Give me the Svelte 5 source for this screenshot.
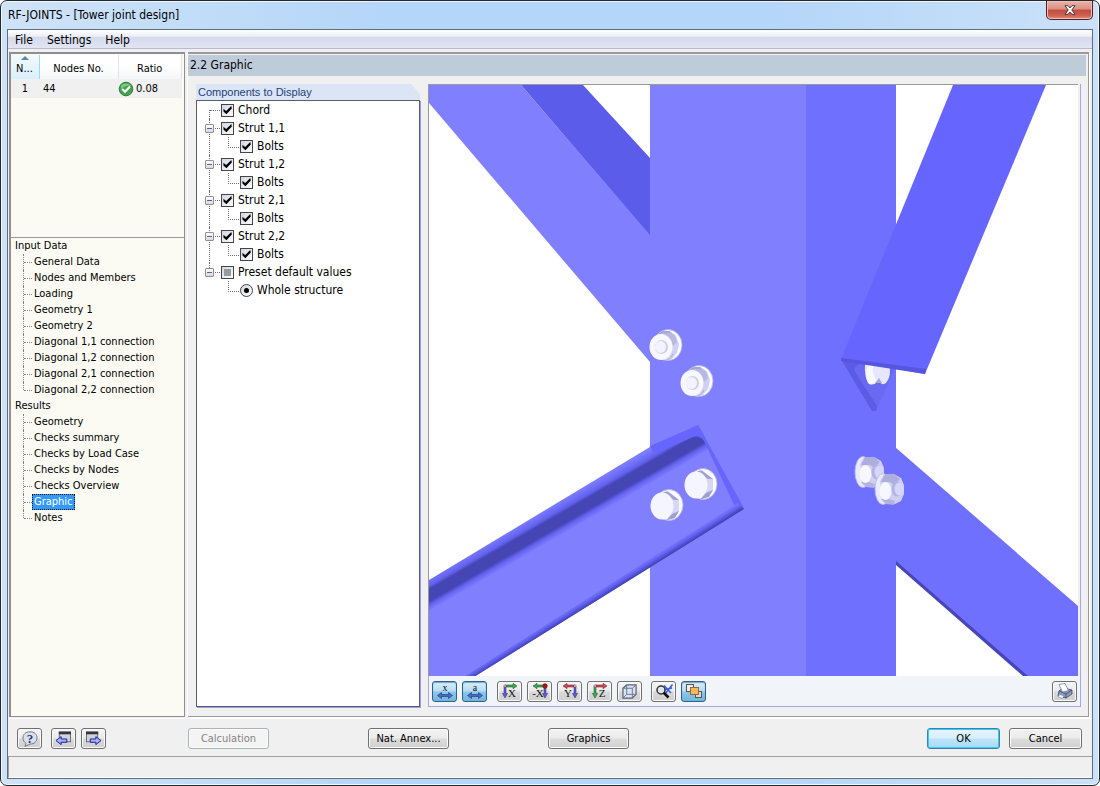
<script lang="ts">
  const inputPages = ['General Data', 'Nodes and Members', 'Loading', 'Geometry 1', 'Geometry 2', 'Diagonal 1,1 connection', 'Diagonal 1,2 connection', 'Diagonal 2,1 connection', 'Diagonal 2,2 connection'];
  const resultPages = ['Geometry', 'Checks summary', 'Checks by Load Case', 'Checks by Nodes', 'Checks Overview', 'Graphic', 'Notes'];
  const groups = [
    { title: 'Input Data', pages: inputPages },
    { title: 'Results', pages: resultPages }
  ];
  const struts = ['Strut 1,1', 'Strut 1,2', 'Strut 2,1', 'Strut 2,2'];
  let current = $state('Graphic');
</script>

{#snippet axes(label: string, h: string, v: string, flip: boolean, dot: boolean)}
  <svg viewBox="0 0 18 16" width="18" height="16" aria-hidden="true">
    <g transform={flip ? 'translate(18 0) scale(-1 1)' : ''}>
      <path d="M4 2H12V.3L16 3L12 5.700V4H4Z" fill={h} stroke="#333" stroke-width=".5" />
      <path d="M3 3H5V10.500H6.500L4 15L1.500 10.500H3Z" fill={v} stroke="#333" stroke-width=".5" />
      <circle cx="4" cy="3" r={dot ? 2.4 : 1.2} fill={dot ? '#a01818' : '#f0c8e8'} stroke="#702020" stroke-width=".4" />
    </g>
    <text x={flip ? 7 : 11} y="14" text-anchor="middle" font-family="Liberation Serif, serif" font-size="11" fill="#111">{label}</text>
  </svg>
{/snippet}

{#snippet dimension(label: string)}
  <svg viewBox="0 0 18 19" width="18" height="19" aria-hidden="true">
    <text x="9" y="9" text-anchor="middle" font-family="Liberation Serif, serif" font-size="10" fill="#111">{label}</text>
    <path d="M1.500 13.500L5.500 10.500V12.500H12.500V10.500L16.500 13.500L12.500 16.500V14.500H5.500V16.500Z" fill="#4a68c8" stroke="#26407c" stroke-width=".7" />
  </svg>
{/snippet}

{#snippet nut(x: number, y: number)}
  <g transform="translate({x} {y})">
    <ellipse cx="3" cy="-1" rx="14" ry="15.5" fill="#fafaff" stroke="#b4b4dc" stroke-width=".8" />
    <path d="M-8-11L-2-15L4-15L11-10L14-2L12 7L7 13L0 15Z" fill="#d0d0f2" />
    <path d="M-7-12L-2-15L4-15L10-11L12-4L8 0L4-8L-2-11Z" fill="#b8b8e4" />
    <path d="M-9-9L-3-14L5-14" fill="none" stroke="#9090a8" stroke-width=".8" />
    <ellipse cx="-4" cy="1" rx="11.5" ry="13" fill="#f7f7ff" />
    <ellipse cx="-3.500" cy="1" rx="6.500" ry="7" fill="#cfcfe2" />
    <ellipse cx="-4.500" cy="1" rx="5.500" ry="6" fill="#f3f3ff" />
    <path d="M-2 15Q6 14 8 8" fill="none" stroke="#a0a0c4" stroke-width=".8" />
  </g>
{/snippet}

{#snippet head(x: number, y: number)}
  <g transform="translate({x} {y})">
    <ellipse cx="3" cy="-1" rx="14" ry="15.500" fill="#fafaff" stroke="#b4b4dc" stroke-width=".8" />
    <path d="M-6-12L1-15L8-10L13-6L13 6L6 9L3 14Z" fill="#d6d6f5" />
    <path d="M-3-14L2-14.500L13-6L8-6L1-10Z" fill="#a2a2d4" />
    <path d="M6 8L13 5L9 12L0 14.500Z" fill="#9f9fce" />
    <ellipse cx="-4" cy="0" rx="11.500" ry="13.500" fill="#f5f5ff" />
  </g>
{/snippet}

{#snippet sideNut(x: number, y: number)}
  <g transform="translate({x} {y})">
    <ellipse cx="-7" cy="0" rx="8" ry="15.500" fill="#e9e9ff" stroke="#b8b8e8" stroke-width=".8" />
    <path d="M-10-8L-6-15L4-15L11-11L14-4L14 5L11 12L5 15L-3 15L-8 12Z" fill="#cfcff6" />
    <path d="M-9-7L-5-15L4-15L10-10L4-4L0-7Z" fill="#aeaedc" />
    <path d="M-9 10L-1 10L5 12L4 16L-4 15Z" fill="#b3b3e0" />
    <ellipse cx="-4.500" cy="2" rx="6" ry="9" fill="#f7f7ff" />
    <ellipse cx="7" cy="0" rx="5.500" ry="7.500" fill="#b4b4e4" />
    <ellipse cx="9" cy="0" rx="4.500" ry="6.500" fill="#d6d6fa" />
  </g>
{/snippet}

{#snippet windowArrow(back: boolean)}
  <svg viewBox="0 0 18 16" width="17" height="15" aria-hidden="true">
    <g transform={back ? '' : 'translate(18 0) scale(-1 1)'}>
      <rect x="4.500" y="1.500" width="12" height="10" fill="#d0d3dc" stroke="#666" />
      <path d="M4 .5H17V3.500H4Z" fill="#33343c" />
      <path d="M1 10.200L6.500 6V8.500H12.500V12H6.500V14.500Z" fill="#9fb4ff" stroke="#18188c" />
    </g>
  </svg>
{/snippet}

<div class="window">
  <header class="titlebar">
    <h1>RF-JOINTS - [Tower joint design]</h1>
    <button class="close" aria-label="Close">
      <svg viewBox="0 0 12 10" width="12" height="10" aria-hidden="true"><path d="M1 .7H4L6 3L8 .7H11L7.800 5L11 9.300H8L6 7L4 9.300H1L4.200 5Z" fill="#fff" stroke="#4e3440" /></svg>
    </button>
  </header>

  <div class="client">
    <nav class="menu" aria-label="Menu">
      <button>File</button><button>Settings</button><button>Help</button>
    </nav>

    <main class="work">
      <aside class="left">
        <div class="nodes">
          <table>
            <thead>
              <tr><th class="sorted"><span>N...</span></th><th>Nodes No.</th><th>Ratio</th></tr>
            </thead>
            <tbody>
              <tr>
                <td class="num">1</td><td>44</td>
                <td><div class="ratio">
                  <svg viewBox="0 0 16 16" width="16" height="16" aria-hidden="true"><circle cx="8" cy="8" r="6.800" fill="#45a34d" stroke="#2c7f3c" /><path d="M3 4.800C5 1.600 11 1.600 13 5C10 4 6 5 3.500 8Z" fill="#9ad59d" opacity=".7" /><path d="M4.200 8L7 10.800L12 5.500" fill="none" stroke="#fff" stroke-width="2" /></svg>
                  <span>0.08</span>
                </div></td>
              </tr>
            </tbody>
          </table>
        </div>
        <nav class="pages" aria-label="Pages">
          {#each groups as g}
            <div class="group">{g.title}</div>
            <ul>
              {#each g.pages as p}
                <li><button class:current={current === p} onclick={() => (current = p)}>{p}</button></li>
              {/each}
            </ul>
          {/each}
        </nav>
      </aside>

      <section class="right">
        <h2>2.2 Graphic</h2>
        <div class="columns">
          <section class="components">
            <h3>Components to Display</h3>
            <ul class="tree">
              <li class="node leaf first"><label><input type="checkbox" checked />Chord</label></li>
              {#each struts as s}
                <li class="node">
                  <button class="toggle" aria-label="Collapse {s}"></button>
                  <label><input type="checkbox" checked />{s}</label>
                  <ul><li class="child"><label><input type="checkbox" checked />Bolts</label></li></ul>
                </li>
              {/each}
              <li class="node last">
                <button class="toggle" aria-label="Collapse presets"></button>
                <label><input type="checkbox" class="mixed" />Preset default values</label>
                <ul><li class="child"><label><input type="radio" name="preset" checked />Whole structure</label></li></ul>
              </li>
            </ul>
          </section>

          <section class="viewer">
            <div class="scene">
              <svg viewBox="429 85 649 591" preserveAspectRatio="xMidYMid slice" role="img" aria-label="Tower joint">
                <defs>
                  <linearGradient id="flange" gradientUnits="userSpaceOnUse" x1="540" y1="513" x2="555" y2="539">
                    <stop offset="0" stop-color="#7c7cff" />
                    <stop offset=".26" stop-color="#6161ee" />
                    <stop offset=".36" stop-color="#4545b4" />
                    <stop offset=".7" stop-color="#4545b4" />
                    <stop offset=".82" stop-color="#6464f2" />
                    <stop offset="1" stop-color="#8080ff" />
                  </linearGradient>
                  <linearGradient id="rim" gradientUnits="userSpaceOnUse" x1="600" y1="588" x2="605" y2="596">
                    <stop offset="0" stop-color="#8080ff" />
                    <stop offset=".5" stop-color="#6262f4" />
                    <stop offset="1" stop-color="#3c3ca8" />
                  </linearGradient>
                </defs>
                <rect x="429" y="85" width="649" height="591" fill="#fff" />
                <path d="M521 85H583L650 158V236Z" fill="#5c5cea" />
                <path d="M429 85H521L650 235V362L429 103Z" fill="#8080ff" />
                <path d="M650 85H806V676H650Z" fill="#8080ff" />
                <path d="M806 85H896V676H806Z" fill="#7070ff" />
                <path d="M895 447L1078 606V676H1024L895 563Z" fill="#7070ff" />
                <path d="M896 561L1028 676H1023L896 565Z" fill="#4646b8" />

                <path d="M841 359L872 411H876L896 366Z" fill="#6969f2" />
                <path d="M841 359L872 411H876L877 406L855 372Q853 366 860 364L896 367V362Z" fill="#5b5be6" />
                <path d="M865 364H889Q892 376 886 383Q882 386 878 381Q874 386 869 384Q864 377 865 364Z" fill="#e6e6fc" />
                <path d="M868 365H873Q872 377 878 381Q872 386 868 383Q864 374 868 365Z" fill="#f8f8ff" />
                <path d="M879 378L882 383H875Z" fill="#a7a7cf" />
                <path d="M953 85H1046L925 374L841 359Z" fill="#6666ff" />
                <path d="M841 358L926 369L925 374L841 361Z" fill="#5555dd" />

                <path d="M429 580L650 447L698 425L744 509L466 682H429Z" fill="url(#flange)" />
                <path d="M650 446L698 425L744 508L736 509L704 441Q700 435 693 437L661 451L653 452Z" fill="#6666ff" />
                <path d="M738 503L744 509L469 680L459 680Z" fill="url(#rim)" />

                {@render nut(665, 346)}
                {@render nut(696, 382)}
                {@render head(700, 485)}
                {@render head(666, 506)}
                {@render sideNut(870, 472)}
                {@render sideNut(890, 489)}
              </svg>
            </div>
            <div class="tools">
              <button class="tool on" aria-label="Show axes">{@render dimension('x')}</button>
              <button class="tool on" aria-label="Show dimensions">{@render dimension('a')}</button>
              <button class="tool gap" aria-label="View in X">{@render axes('X', '#28b848', '#5a5af0', false, false)}</button>
              <button class="tool" aria-label="View against X">{@render axes('-X', '#28b848', '#5a5af0', true, true)}</button>
              <button class="tool" aria-label="View in Y">{@render axes('Y', '#ee3a50', '#5a5af0', true, false)}</button>
              <button class="tool" aria-label="View in Z">{@render axes('Z', '#ee3a50', '#28b848', false, false)}</button>
              <button class="tool" aria-label="Isometric view"><svg viewBox="0 0 20 16" width="19" height="15" aria-hidden="true"><path d="M3 4.500L7 1H17V11L13 15H3Z" fill="#dbe4f3" stroke="#56617c" stroke-width="1.300" /><path d="M3 4.500H13V15M13 4.500L17 1M7 1V11H17M7 11L3 15" fill="none" stroke="#66728e" /></svg></button>
              <button class="tool zoom" aria-label="Zoom all"><svg viewBox="0 0 20 16" width="20" height="16" aria-hidden="true"><path d="M10 2.500L17 10M9 7L18 5M11 11L18.500 1.500" stroke="#3a5cd8" stroke-width="1.500" /><circle cx="7" cy="7" r="4" fill="#dfe6ee" stroke="#333" stroke-width="1.500" /><path d="M9.500 9.500L14.500 14.500" stroke="#111" stroke-width="2.600" /></svg></button>
              <button class="tool on" aria-label="Show solid"><svg viewBox="0 0 18 16" width="18" height="16" aria-hidden="true"><rect x="1.500" y="1.500" width="7" height="7" fill="#eee" stroke="#555" /><rect x="10.500" y="8.500" width="6" height="6" fill="#d8d8d8" stroke="#555" /><rect x="5.500" y="4.500" width="8" height="7" fill="#f5b860" stroke="#a06828" /></svg></button>
              <button class="tool print" aria-label="Print"><svg viewBox="0 0 20 16" width="20" height="16" aria-hidden="true"><path d="M4 8L8 5L17 7V11L11 15L3 13Z" fill="#8d98bd" stroke="#3c4668" stroke-width=".8" /><path d="M4 8L11 11L17 7M11 11V15" fill="none" stroke="#3c4668" stroke-width=".8" /><path d="M4 1.500L10 .5L13.500 7.500L7.500 9Z" fill="#fff" stroke="#7684a8" stroke-width=".8" /><path d="M5 11.500L9 13L7 15.500L3 13.500Z" fill="#f5f7ff" stroke="#7684a8" stroke-width=".6" /></svg></button>
            </div>
          </section>
        </div>
      </section>
    </main>

    <footer class="actions">
      <div class="icons">
        <button class="tool" aria-label="Help"><svg viewBox="0 0 18 16" width="18" height="16" aria-hidden="true"><path d="M9 .8C13.500 .8 16 3.500 16 7S13.500 13 9 13L4 15.500L5 12.200C3 11 2 9.200 2 7C2 3.500 4.500 .8 9 .8Z" fill="#dbe0e8" stroke="#767b85" /><text x="9" y="12" text-anchor="middle" font-family="Liberation Serif, serif" font-size="13" font-weight="bold" fill="#263c80">?</text></svg></button>
        <button class="tool prev" aria-label="Previous page">{@render windowArrow(true)}</button>
        <button class="tool" aria-label="Next page">{@render windowArrow(false)}</button>
      </div>
      <button class="push" disabled>Calculation</button>
      <button class="push annex">Nat. Annex...</button>
      <button class="push graphics">Graphics</button>
      <div class="confirm">
        <button class="push ok">OK</button>
        <button class="push">Cancel</button>
      </div>
    </footer>
    <div class="status"></div>
  </div>
</div>

<style>
  :global(body) { margin: 0; background: #fff; }
  .window, .window * { box-sizing: border-box; }
  .window {
    min-height: 100vh;
    display: flex;
    flex-direction: column;
    padding: 0 6px 6px;
    border: 1px solid #25282d;
    border-radius: 7px;
    background: linear-gradient(90deg, #cfe3f8, #b4d6f8 35%, #b4d6f8 70%, #cbe1f9);
    box-shadow: inset 0 0 0 1px #eef6ff;
    font-family: "DejaVu Sans Condensed", "Noto Sans", sans-serif;
    font-size: 11px;
    line-height: 16px;
    color: #000;
  }
  button { font: inherit; color: inherit; margin: 0; padding: 0; border: 0; background: none; }
  h1, h2, h3, ul { margin: 0; padding: 0; font-size: inherit; font-weight: normal; list-style: none; }
  svg { display: block; overflow: visible; }

  .titlebar { height: 28px; display: flex; justify-content: space-between; align-items: flex-start; }
  h1 { padding: 6px 0 0 1px; font-size: 12px; }
  .close {
    width: 47px; height: 19px; display: grid; place-items: center;
    border: 1px solid #5a1c1e; border-top: 0; border-radius: 0 0 5px 5px;
    background: linear-gradient(#e8b3aa, #dc8f84 45%, #c04c3c 50%, #cc6152 80%, #dc8c78);
    box-shadow: inset 0 0 0 1px #edc0b8;
  }

  .client { flex: 1; display: flex; flex-direction: column; border: 1px solid #5d6e7c; background: #f0f0f0; }
  .menu { height: 19px; display: flex; border-bottom: 1px solid #b6bccc; background: linear-gradient(#fff, #eceef7 35%, #d5daec 40%, #e1e5f3); }
  .menu button { padding: 1px 7px 0; font-size: 12px; line-height: 18px; }

  .work { flex: 1; display: flex; gap: 3px; padding-top: 3px; }
  .left { flex: 0 0 176px; display: flex; flex-direction: column; margin-left: 1px; border: solid #8f8f8f; border-width: 2px 1px 1px 2px; background: #fbfbf3; }
  .nodes { height: 184px; padding: 1px 2px 0 0; border-bottom: 1px solid #999; }
  table { width: 100%; border-collapse: collapse; table-layout: fixed; }
  th { height: 24px; padding: 4px 0 0; font-weight: normal; text-align: center; border-right: 1px solid #dfe3e8; background: linear-gradient(#fff 50%, #f4f5f7); }
  th:nth-child(1) { width: 28px; }
  th:nth-child(2) { width: 79px; }
  .sorted { position: relative; border-right-color: #96d9f9; background: linear-gradient(#f2fafe, #d8f0fb); text-align: left; }
  .sorted span { padding-left: 5px; }
  .sorted::before { content: ""; position: absolute; left: 10px; top: 1px; border: 4px solid transparent; border-top: 0; border-bottom: 4px solid #5b88aa; }
  td { height: 19px; padding: 1px 0 0 4px; background: #f0f0f0; }
  .num { padding: 1px 0 0; text-align: center; }
  td:last-child { padding: 1px 0 0; }
  .ratio { display: flex; gap: 2px; align-items: center; }

  .pages { flex: 1; padding: 0 4px; }
  .group { height: 16px; }
  .pages li { position: relative; height: 16px; padding-left: 17px; display: flex; }
  .pages li::before { content: ""; position: absolute; left: 8px; top: 0; bottom: 0; border-left: 1px dotted #808080; }
  .pages li:last-child::before { bottom: 8px; }
  .pages li::after { content: ""; position: absolute; left: 9px; top: 8px; width: 8px; border-top: 1px dotted #808080; }
  .pages button { padding: 0 2px; white-space: nowrap; }
  .pages .current { background: #3399ff; color: #fff; outline: 1px dotted #1f1408; outline-offset: -1px; }

  .right { flex: 1; min-width: 0; display: flex; flex-direction: column; margin-right: 3px; border: solid #9a9a9a; border-width: 2px 1px 1px 0; box-shadow: -1px 0 #fff, 1px 1px #fff; }
  h2 { height: 21px; margin: 1px 2px 0 0; padding-left: 2px; line-height: 21px; font-size: 12px; background: #becbd9; }
  .columns { flex: 1; display: flex; gap: 8px; padding: 8px 7px 9px 8px; }
  .components { flex: 0 0 224px; display: flex; flex-direction: column; }
  h3 { height: 16px; padding-left: 2px; line-height: 16px; font-family: "Liberation Sans", sans-serif; color: #1f4179; background: #dbe5f6; clip-path: polygon(0 0, 215px 0, 100% 10px, 100% 100%, 0 100%); }
  .tree { flex: 1; border: 1px solid #5c5c68; background: #fff; box-shadow: 1px 1px #9c9cf4; }
  .tree label { display: flex; align-items: center; gap: 4px; height: 18px; font-size: 12px; white-space: nowrap; }
  .node { position: relative; padding-left: 24px; }
  .node::before { content: ""; position: absolute; left: 12px; top: 0; bottom: 0; border-left: 1px dotted #707070; }
  .node::after { content: ""; position: absolute; left: 13px; top: 9px; width: 10px; border-top: 1px dotted #707070; }
  .first::before { top: 9px; }
  .last::before { bottom: 27px; }
  .toggle { position: absolute; z-index: 1; left: 8px; top: 5px; width: 9px; height: 9px; border: 1px solid #8e8f8f; border-radius: 1px; background: linear-gradient(#4b63a7, #4b63a7) center / 5px 1px no-repeat, linear-gradient(#fff, #d8d8d8); }
  .child { position: relative; padding-left: 19px; }
  .child::before { content: ""; position: absolute; left: 7px; top: 0; width: 10px; height: 10px; border: dotted #707070; border-width: 0 0 1px 1px; }
  input { position: relative; appearance: none; flex: none; width: 13px; height: 13px; margin: 0; border: 1px solid #444; background: linear-gradient(135deg, #d2d7e2, #fbfbfd); }
  input[type="checkbox"]:checked::before { content: ""; position: absolute; inset: 1px; background: #000; clip-path: polygon(5% 35%, 35% 62%, 92% 5%, 98% 32%, 38% 96%, 5% 66%); }
  .mixed::before { content: ""; position: absolute; inset: 2px; background: #9a9a9a; }
  input[type="radio"] { border-radius: 50%; }
  input[type="radio"]::before { content: ""; position: absolute; inset: 3px; border-radius: 50%; background: #000; }

  .viewer { flex: 1; min-width: 0; display: flex; flex-direction: column; border: solid #a5a5ee; border-width: 0 1px 1px 0; }
  .scene { position: relative; flex: 1; margin-right: 2px; border: solid #9a9a9a; border-width: 1px 0 0 1px; overflow: hidden; }
  .scene svg { position: absolute; inset: 0; width: 100%; height: 100%; overflow: hidden; }
  .tools { height: 30px; display: flex; gap: 5px; align-items: center; padding: 0 3px; background: #f1f5fa; border-left: 1px solid #a5a5ee; }
  .tool { width: 25px; height: 21px; display: grid; place-items: center; border: 1px solid #707070; border-radius: 3px; background: linear-gradient(#f5f5f5, #e9e9e9 48%, #d9d9d9 52%, #cfcfcf); box-shadow: inset 0 0 0 1px #fafafa; }
  .tool.on { border-color: #2c628b; background: linear-gradient(#d8eefb, #b5dcf3 48%, #8cc8ea 52%, #72b5dc); box-shadow: inset 0 1px 1px #7aa6c0; }
  .gap { margin-left: 5px; }
  .zoom { margin-left: 4px; }
  .print { margin-left: auto; }

  .actions { height: 38px; margin-top: 1px; display: flex; align-items: center; padding: 2px 10px 0 9px; border-top: 1px solid #fff; }
  .icons { display: flex; gap: 5px; width: 171px; flex: none; }
  .prev { margin-left: 4px; }
  .push { width: 81px; height: 21px; line-height: 19px; flex: none; border: 1px solid #707070; border-radius: 3px; background: linear-gradient(#f3f3f3, #ebebeb 48%, #dddddd 52%, #cfcfcf); box-shadow: inset 0 0 0 1px #fbfbfb; }
  .push:disabled { color: #838383; border-color: #adb2b5; background: #f4f4f4; }
  .annex, .graphics { margin-left: 99px; }
  .confirm { display: flex; gap: 9px; margin-left: auto; }
  .confirm .push { width: 73px; }
  .push.ok { border-color: #3c7fb1; background: linear-gradient(#e5f4fc, #d9effb 48%, #bde5fa 52%, #a9d9f2); box-shadow: inset 0 0 0 1px #33cdf5; }
  .status { height: 22px; border-top: 1px solid #a0a0a0; border-bottom: 1px solid #fff; border-left: 1px solid #a0a0a0; }
</style>
